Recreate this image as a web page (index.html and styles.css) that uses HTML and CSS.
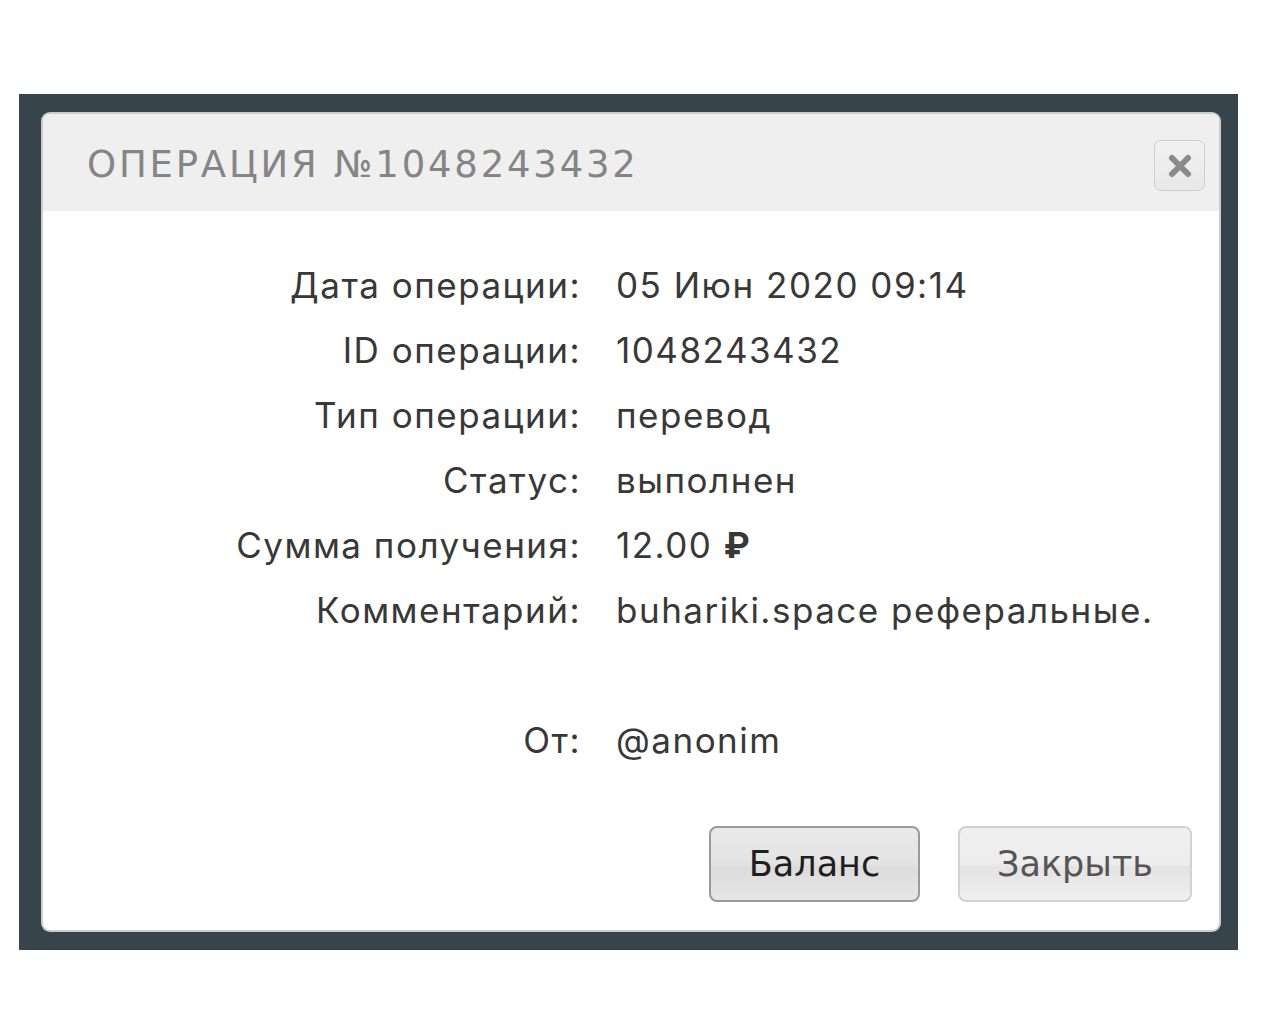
FILE: index.html
```html
<!DOCTYPE html>
<html lang="ru">
<head>
<meta charset="utf-8">
<title>Операция</title>
<link rel="stylesheet" href="styles.css">
</head>
<body>
<div class="backdrop">
  <div class="modal">
    <div class="modal-header">
      <h1 class="modal-title">ОПЕРАЦИЯ №1048243432</h1>
      <button class="close-btn" aria-label="close">
        <svg width="26" height="26" viewBox="0 0 26 26"><path d="M5 5 L21 21 M21 5 L5 21" stroke="#8a8a8a" stroke-width="6" stroke-linecap="round"/></svg>
      </button>
    </div>
    <div class="modal-body">
      <div class="row"><div class="label">Дата операции:</div><div class="value">05 Июн 2020 09:14</div></div>
      <div class="row"><div class="label">ID операции:</div><div class="value">1048243432</div></div>
      <div class="row"><div class="label">Тип операции:</div><div class="value">перевод</div></div>
      <div class="row"><div class="label">Статус:</div><div class="value">выполнен</div></div>
      <div class="row"><div class="label">Сумма получения:</div><div class="value">12.00 <span class="rub">₽</span></div></div>
      <div class="row"><div class="label">Комментарий:</div><div class="value">buhariki.space реферальные.</div></div>
      <div class="row spacer"></div>
      <div class="row"><div class="label">От:</div><div class="value">@anonim</div></div>
    </div>
    <div class="modal-footer">
      <button class="btn btn-primary">Баланс</button>
      <button class="btn btn-default">Закрыть</button>
    </div>
  </div>
</div>
</body>
</html>
```
FILE: styles.css
```css
html, body {
  margin: 0;
  padding: 0;
  background: #ffffff;
}
body {
  padding-top: 94px;
}
.backdrop {
  margin-left: 19px;
  width: 1219px;
  height: 856px;
  box-sizing: border-box;
  background: #37444c;
  padding: 20px 19px 20px 24px;
}
.modal {
  background: #ffffff;
  height: 816px;
  border-radius: 7px;
  box-shadow: 0 0 0 2px #c9cdd0;
  display: flex;
  flex-direction: column;
  overflow: hidden;
}
.modal-header {
  background: #efefef;
  height: 97px;
  display: flex;
  align-items: center;
  justify-content: space-between;
  padding: 0 14px 0 44px;
  flex-shrink: 0;
}
.modal-title {
  margin: 0;
  font-family: "DejaVu Sans", sans-serif;
  font-weight: normal;
  font-size: 37px;
  letter-spacing: 2.8px;
  color: #858585;
  padding-top: 4px;
}
.close-btn {
  width: 51px;
  height: 51px;
  border: 1px solid #cfcfcf;
  border-radius: 7px;
  background: linear-gradient(#f2f2f2, #e8e8e8);
  display: flex;
  align-items: center;
  justify-content: center;
  padding: 0;
  margin-top: 6px;
}
.modal-body {
  padding-top: 41px;
  font-family: Inter, sans-serif;
  font-size: 35px;
  letter-spacing: 1.5px;
  color: #383838;
}
.row {
  display: flex;
  height: 65px;
  align-items: center;
}
.label {
  width: 538px;
  text-align: right;
  flex-shrink: 0;
}
.value {
  padding-left: 35px;
  white-space: nowrap;
}
.rub {
  font-weight: bold;
}
.modal-footer {
  margin-top: auto;
  display: flex;
  justify-content: flex-end;
  gap: 38px;
  padding: 0 27px 28px 0;
}
.btn {
  height: 76px;
  border-radius: 8px;
  font-family: "DejaVu Sans", sans-serif;
  font-size: 35px;
  padding: 0;
}
.btn-primary {
  width: 211px;
  border: 2px solid #9a9a9a;
  background: linear-gradient(#e9e9e9 0%, #e3e3e3 50%, #dcdcdc 55%, #e6e6e6 100%);
  color: #1f1f1f;
}
.btn-default {
  width: 234px;
  border: 2px solid #d2d2d2;
  background: linear-gradient(#f0f0f0 0%, #ececec 50%, #e4e4e4 55%, #efefef 100%);
  color: #555555;
}
```
